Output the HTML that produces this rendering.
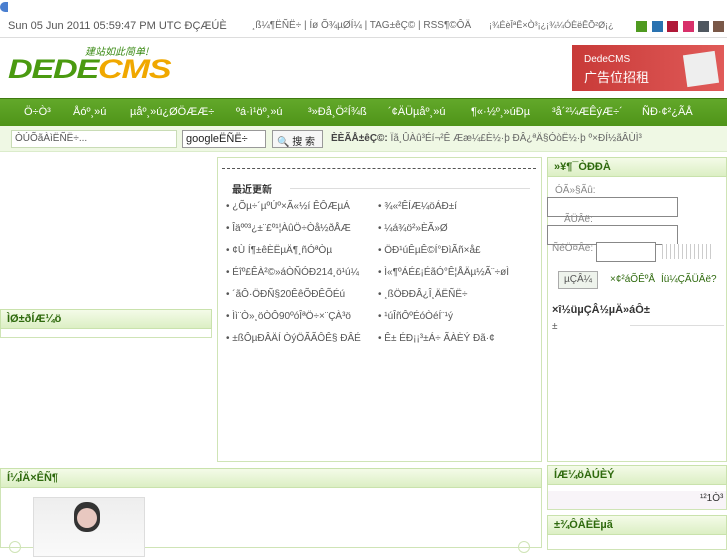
<!DOCTYPE html>
<html><head><meta charset="utf-8"><style>
*{margin:0;padding:0;box-sizing:border-box}
body{width:727px;height:545px;overflow:hidden;background:#fff;font-family:"Liberation Sans","DejaVu Sans",sans-serif;font-size:11px;color:#555;position:relative}
.a{position:absolute}
.hd{background:linear-gradient(#f4fbe8,#dcefc4);border:1px solid #c9e2ac;color:#2f6a0e;font-weight:bold;font-size:11px;padding:3px 6px;height:20px}
.box{border:1px solid #cfe4b6;background:#fff}
.nav span{margin:0 0 0 0;color:#fff;font-size:11px;position:absolute;top:7px}
.li{position:absolute;font-size:10px;color:#555;white-space:nowrap}
.sw{position:absolute;top:21px;width:11px;height:11px}
</style></head><body>
<div class="a" style="left:0;top:2px;width:8px;height:10px;border-radius:6px 0 0 6px;background:#4a7fd0"></div>
<div class="a" style="left:8px;top:20px;font-size:11px;color:#555">Sun 05 Jun 2011 05:59:47 PM UTC ÐÇÆÚÈ</div>
<div class="a" style="left:252px;top:20px;font-size:10px;color:#666">¸ß¼¶ËÑË÷ | Íø Õ¾µØÍ¼ | TAG±êÇ© | RSS¶©ÔÄ</div>
<div class="a" style="left:489px;top:20px;font-size:9px;color:#666">¡¾ÉèÎªÊ×Ò³¡¿¡¾¼ÓÈëÊÕ²Ø¡¿</div>
<div class="sw" style="left:636px;background:#4f9a20"></div>
<div class="sw" style="left:652px;background:#2a72b0"></div>
<div class="sw" style="left:667px;background:#b01838"></div>
<div class="sw" style="left:683px;background:#d8306a"></div>
<div class="sw" style="left:698px;background:#505860"></div>
<div class="sw" style="left:713px;background:#7a5848"></div>
<div class="a" style="left:0;top:37px;width:727px;height:1px;background:#ddd"></div>
<div class="a" style="left:85px;top:43px;font-size:10px;color:#3a8a14;font-style:italic;font-family:'Noto Sans CJK SC',sans-serif">建站如此简单!</div>
<div class="a" style="left:8px;top:56px;font-size:28px;font-weight:bold;font-style:italic;letter-spacing:-1px;line-height:28px;transform:scaleX(1.22) scaleY(0.95);transform-origin:left top"><span style="color:#4a9a10">DEDE</span><span style="color:#f0a800">CMS</span></div>
<div class="a" style="left:572px;top:45px;width:152px;height:46px;background:linear-gradient(90deg,#c83a38,#e05a58)">
<div class="a" style="left:12px;top:9px;color:#fff;font-size:10px">DedeCMS</div>
<div class="a" style="left:12px;top:22px;color:#fff;font-size:13px;font-family:'Noto Sans CJK SC',sans-serif">广告位招租</div>
<div class="a" style="left:113px;top:8px;width:32px;height:32px;background:#eee;transform:rotate(-8deg)"></div></div>
<div class="a nav" style="left:0;top:98px;width:727px;height:28px;background:linear-gradient(#62a82a,#4f9418);border-top:1px solid #3f7a10">
<span style="left:24px">Ö÷Ò³</span><span style="left:73px">Åóº¸»ú</span><span style="left:130px">µåº¸»ú¿ØÖÆÆ÷</span><span style="left:236px">ºá·ì¹öº¸»ú</span><span style="left:308px">³»Ðå¸Ö²Í¾ß</span><span style="left:388px">´¢ÄÜµåº¸»ú</span><span style="left:471px">¶«·½º¸»úÐµ</span><span style="left:552px">³å´²¼ÆÊýÆ÷´</span><span style="left:642px">ÑÐ·¢²¿ÃÅ</span></div>
<div class="a" style="left:0;top:126px;width:727px;height:26px;background:#eff8e4;border-bottom:1px solid #dbeccb"></div>
<div class="a" style="left:11px;top:130px;width:166px;height:18px;border:1px solid #c9dcb6;background:#fff;font-size:10px;padding:2px 3px">ÒÚÕãÀìËÑË÷...</div>
<div class="a" style="left:182px;top:130px;width:84px;height:18px;border:1px solid #999;background:#fff;font-size:11px;padding:2px 3px;color:#222">googleËÑË÷</div>
<div class="a" style="left:272px;top:130px;width:51px;height:18px;border:1px solid #999;background:#f6f6f6;font-size:10px;padding:2px 4px;color:#222">🔍 搜 索</div>
<div class="a" style="left:331px;top:133px;font-size:10px;color:#666"><b style="color:#444">ÈÈÃÅ±êÇ©:</b> Ïã¸ÛÀû³Éí¬²Ê Ææ¼£È½·þ ÐÂ¿ªÄ§ÓòË½·þ º×ÐÍ½ãÂÙÌ³</div>
<div class="a box" style="left:217px;top:157px;width:325px;height:305px">
<div class="a" style="left:4px;top:10px;width:314px;border-top:1px dashed #555"></div>
<div class="a" style="left:14px;top:23px;font-size:10px;font-weight:bold;color:#333;font-family:'Noto Sans CJK SC',sans-serif">最近更新</div>
<div class="a" style="left:72px;top:30px;width:240px;height:1px;background:#ddd"></div>
<div class="li" style="left:8px;top:43px">• ¿Õµ÷´µºÚº×Ã«½í ÊÔÆµÁ</div><div class="li" style="left:160px;top:43px">• ¾«²ÊÍÆ¼öÁÐ±í</div>
<div class="li" style="left:8px;top:65px">• Îäºº³¿±¨£º¹¦ÀûÖ÷Òå½ðÅÆ</div><div class="li" style="left:160px;top:65px">• ¼á¾ö²»ÈÃ»Ø</div>
<div class="li" style="left:8px;top:87px">• ¢Ù Í¶±êÈËµÄ¶¸ñÓªÒµ</div><div class="li" style="left:160px;top:87px">• ÖÐ¹úÊµÊ©Í°ÐìÃñ×å£</div>
<div class="li" style="left:8px;top:109px">• Éîº£ÊÀ²©»áÒÑÓÐ214¸ö¹ú¼</div><div class="li" style="left:160px;top:109px">• Ì«¶ºÁÉ£¡ÉãÓ°Ê¦ÅÄµ½Ã¨÷øÌ</div>
<div class="li" style="left:8px;top:131px">• ´ãÔ·ÖÐÑ§20ÊêÕÐÊÕÉú</div><div class="li" style="left:160px;top:131px">• ¸ßÖÐÐÂ¿Î¸ÄËÑË÷</div>
<div class="li" style="left:8px;top:153px">• Ìì¨Ò»¸öÒÔ90ºóÎªÖ÷×¨ÇÀ³ö</div><div class="li" style="left:160px;top:153px">• ¹úÎñÔºÉóÒéÍ¨¹ý</div>
<div class="li" style="left:8px;top:175px">• ±ßÔµÐÂÄÍ ÒýÖÃÃÔÊ§ ÐÂÉ</div><div class="li" style="left:160px;top:175px">• Ê± ÉÐ¡¡³±Á÷ ÃÀÈÝ Ðã·¢</div>
</div>
<div class="a box" style="left:547px;top:157px;width:180px;height:305px">
<div class="hd" style="margin:-1px">»¥¶¯ÒÐÐÀ</div>
<div class="a" style="left:7px;top:27px;font-size:10px;color:#888">ÓÃ»§Ãû:</div>
<div class="a" style="left:-1px;top:39px;width:131px;height:20px;border:1px solid #888;background:#fff"></div>
<div class="a" style="left:16px;top:56px;font-size:10px;color:#888">ÃÜÂë:</div>
<div class="a" style="left:-1px;top:67px;width:131px;height:20px;border:1px solid #888;background:#fff"></div>
<div class="a" style="left:4px;top:85px;font-size:10px;color:#888">ÑéÖ¤Âë:</div>
<div class="a" style="left:48px;top:84px;width:60px;height:20px;border:1px solid #888;background:#fff"></div>
<div class="a" style="left:114px;top:86px;width:50px;height:15px;background:repeating-linear-gradient(90deg,#ccc 0 1px,#fff 1px 4px)"></div>
<div class="a" style="left:10px;top:113px;width:40px;height:18px;border:1px solid #aaa;background:#eef3ec;font-size:10px;padding:2px 5px">µÇÂ¼</div>
<div class="a" style="left:62px;top:116px;font-size:10px;color:#2f6a0e">×¢²áÕÊºÅ</div>
<div class="a" style="left:113px;top:116px;font-size:10px;color:#2f6a0e">Íü¼ÇÃÜÂë?</div>
<div class="a" style="left:4px;top:146px;font-size:11px;font-weight:bold;color:#333">×î½üµÇÂ½µÄ»áÔ±</div>
<div class="a" style="left:4px;top:163px;font-size:10px">±</div>
<div class="a" style="left:82px;top:167px;width:94px;height:1px;background:#ddd"></div>
</div>
<div class="a box" style="left:0;top:309px;width:212px;height:29px"><div class="hd" style="margin:-1px">ÌØ±ðÍÆ¼ö</div></div>
<div class="a box" style="left:0;top:468px;width:542px;height:80px"><div class="hd" style="margin:-1px">Í¼ÎÄ×ÊÑ¶</div>
<div class="a" style="left:32px;top:28px;width:112px;height:60px;border:1px solid #ddd;background:linear-gradient(#eee,#fafafa)">
<div class="a" style="left:40px;top:4px;width:26px;height:30px;border-radius:12px;background:#333"></div>
<div class="a" style="left:43px;top:10px;width:20px;height:20px;border-radius:10px;background:#e8c8c0"></div></div>
<div class="a" style="left:8px;top:72px;width:12px;height:12px;border:1px solid #cfe4b6;border-radius:6px"></div>
<div class="a" style="left:517px;top:72px;width:12px;height:12px;border:1px solid #cfe4b6;border-radius:6px"></div>
</div>
<div class="a box" style="left:547px;top:465px;width:180px;height:45px"><div class="hd" style="margin:-1px">ÍÆ¼öÀÚÈÝ</div>
<div class="a" style="left:0;top:25px;width:178px;height:18px;background:#f8f4f8"></div>
<div class="a" style="left:152px;top:27px;font-size:10px;color:#333">¹²1Ò³</div></div>
<div class="a box" style="left:547px;top:515px;width:180px;height:35px"><div class="hd" style="margin:-1px">±¾ÔÂÈÈµã</div></div>
</body></html>
